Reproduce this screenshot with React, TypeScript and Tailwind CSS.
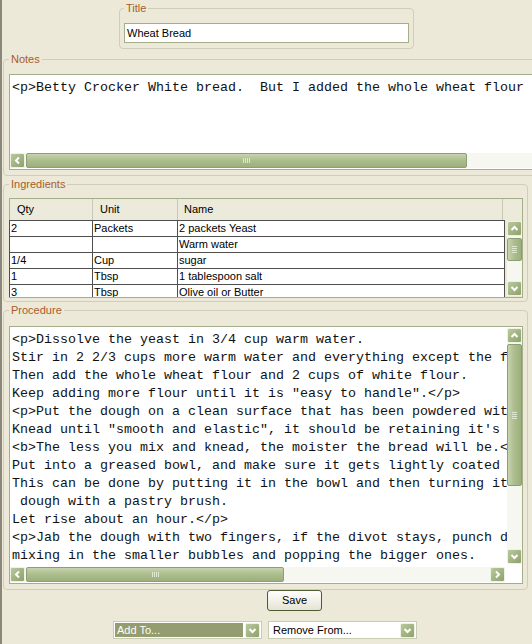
import React from 'react'

const sans = "font-['Liberation_Sans',Arial,sans-serif] text-[11px]"
const mono = "font-['Liberation_Mono','Courier_New',monospace] text-[13.33px] leading-[18px] text-[#111] whitespace-pre"

type Dir = 'up' | 'down' | 'left' | 'right'

const chevrons: Record<Dir, string> = {
  up: '1.5,6 4.5,3 7.5,6',
  down: '1.5,3 4.5,6 7.5,3',
  left: '6,1.5 3,4.5 6,7.5',
  right: '3,1.5 6,4.5 3,7.5',
}

function Arrow({ dir }: { dir: Dir }) {
  return (
    <div className="w-[15px] h-[15px] shrink-0 rounded-[2px] border border-[#eef1e4] bg-linear-to-br from-[#b9c99d] to-[#8fa16b] flex items-center justify-center">
      <svg width="9" height="9" viewBox="0 0 9 9">
        <polyline points={chevrons[dir]} fill="none" stroke="white" strokeWidth="2" />
      </svg>
    </div>
  )
}

function HScroll({ thumb, className = '' }: { thumb: string; className?: string }) {
  return (
    <div className={`flex h-[15px] bg-[#f7f7f2] ${className}`}>
      <Arrow dir="left" />
      <div className="flex-1 flex">
        <div className={`${thumb} h-full ml-px rounded-[2px] border border-[#8e9e72] bg-linear-to-b from-[#c6d3ad] via-[#abbd8c] to-[#9daf7d] flex items-center justify-center gap-px`}>
          {[0, 1, 2, 3].map(i => <div key={i} className="w-px h-[5px] bg-[#dfe7cf]" />)}
        </div>
      </div>
      <Arrow dir="right" />
    </div>
  )
}

function VScroll({ thumb, top, className = '' }: { thumb: string; top: string; className?: string }) {
  return (
    <div className={`flex flex-col w-[15px] bg-[#f7f7f2] ${className}`}>
      <Arrow dir="up" />
      <div className="flex-1 flex flex-col">
        <div className={`${top} ${thumb} w-full rounded-[2px] border border-[#8e9e72] bg-linear-to-r from-[#c6d3ad] via-[#abbd8c] to-[#9daf7d] flex flex-col items-center justify-center gap-px`}>
          {[0, 1, 2, 3].map(i => <div key={i} className="h-px w-[5px] bg-[#dfe7cf]" />)}
        </div>
      </div>
      <Arrow dir="down" />
    </div>
  )
}

function Legend({ children }: { children: React.ReactNode }) {
  return <legend className="px-[2px] leading-[13px] text-[#a95c2c]">{children}</legend>
}

const ingredients = [
  ['2', 'Packets', '2 packets Yeast'],
  ['', '', 'Warm water'],
  ['1/4', 'Cup', 'sugar'],
  ['1', 'Tbsp', '1 tablespoon salt'],
  ['3', 'Tbsp', 'Olive oil or Butter'],
]

const procedure = [
  '<p>Dissolve the yeast in 3/4 cup warm water.',
  'Stir in 2 2/3 cups more warm water and everything except the flour.',
  'Then add the whole wheat flour and 2 cups of white flour.',
  'Keep adding more flour until it is "easy to handle".</p>',
  '<p>Put the dough on a clean surface that has been powdered with flour.',
  'Knead until "smooth and elastic", it should be retaining it\'s shape.',
  '<b>The less you mix and knead, the moister the bread will be.</b>',
  'Put into a greased bowl, and make sure it gets lightly coated with oil.',
  'This can be done by putting it in the bowl and then turning it over,',
  ' dough with a pastry brush.',
  'Let rise about an hour.</p>',
  '<p>Jab the dough with two fingers, if the divot stays, punch down the dough,',
  'mixing in the smaller bubbles and popping the bigger ones.',
]

export default function App() {
  return (
    <div className={`${sans} w-[532px] h-[644px] overflow-hidden bg-[#ece9d8] border-l-2 border-[#8b887b] flex flex-col pt-[2px] text-black`}>
      <fieldset className="ml-[117px] w-[295px] border border-[#d0cdb9] rounded-[4px] px-[4px] pt-[8px] pb-[5px]">
        <Legend>Title</Legend>
        <div className="h-[20px] border border-[#a5ae8a] bg-white flex items-center pl-[2px]">Wheat Bread</div>
      </fieldset>

      <fieldset className="ml-px mt-[4px] w-[525px] border border-[#d0cdb9] rounded-[4px] pl-[5px] pr-[4px] pt-[8px] pb-[5px]">
        <Legend>Notes</Legend>
        <div className="h-[96px] border border-[#a5ae8a] bg-white flex flex-col">
          <div className={`${mono} flex-1 overflow-hidden pl-[2px] pt-[4px]`}>
            {'<p>Betty Crocker White bread.  But I added the whole wheat flour and some olive oil.</p>'}
          </div>
          <HScroll thumb="w-[441px]" className="mb-px" />
        </div>
      </fieldset>

      <fieldset className="ml-px mt-[2px] w-[525px] border border-[#d0cdb9] rounded-[4px] pl-[5px] pr-[4px] pt-[7px] pb-[3px]">
        <Legend>Ingredients</Legend>
        <div className="h-[100px] border-t border-r border-b border-[#a5ae8a] flex flex-col">
          <div className="flex h-[21px] border-l border-[#a5ae8a] bg-[#ebeadb] shrink-0">
            <div className="w-[83px] border-r border-[#cbc7b6] pl-[7px] flex items-center">Qty</div>
            <div className="w-[85px] border-r border-[#cbc7b6] pl-[7px] flex items-center">Unit</div>
            <div className="w-[325px] border-r border-[#cbc7b6] pl-[6px] flex items-center">Name</div>
          </div>
          <div className="flex flex-1 overflow-hidden">
            <div className="w-[496px] border-t border-l border-[#4f4f4f] bg-white">
              {ingredients.map((r, i) => (
                <div key={i} className="flex h-[16px] border-b border-[#4f4f4f] leading-[15px]">
                  <div className="w-[83px] border-r border-[#4f4f4f] pl-px">{r[0]}</div>
                  <div className="w-[85px] border-r border-[#4f4f4f] pl-px">{r[1]}</div>
                  <div className="flex-1 border-r border-[#4f4f4f] pl-px">{r[2]}</div>
                </div>
              ))}
            </div>
            <div className="flex-1 flex justify-end pt-px pb-px">
              <VScroll thumb="h-[23px]" top="mt-[2px]" />
            </div>
          </div>
        </div>
      </fieldset>

      <fieldset className="ml-px mt-[2px] w-[525px] border border-[#d0cdb9] rounded-[4px] pl-[5px] pr-[4px] pt-[9px] pb-[5px]">
        <Legend>Procedure</Legend>
        <div className="h-[258px] border border-[#a5ae8a] bg-white flex flex-col">
          <div className="flex flex-1 overflow-hidden">
            <div className={`${mono} w-[497px] overflow-hidden pl-[2px] pt-[4px]`}>
              {procedure.map((l, i) => <div key={i}>{l}</div>)}
            </div>
            <VScroll thumb="h-[142px]" top="mt-[1px]" className="mt-px mb-[3px]" />
          </div>
          <div className="flex h-[15px] mb-px">
            <HScroll thumb="w-[258px]" className="w-[495px]" />
          </div>
        </div>
      </fieldset>

      <button className="ml-[265px] w-[55px] h-[21px] rounded-[3px] border border-[#4f5b35] bg-linear-to-b from-white to-[#e6e3d3] flex items-center justify-center">
        Save
      </button>

      <div className="flex gap-[6px] ml-[111px] mt-[10px]">
        <div className="w-[149px] h-[18px] border border-[#c8ccb4] bg-white flex p-px">
          <div className="flex-1 bg-[#949d6f] text-white pl-[2px] flex items-center mr-[2px]">Add To...</div>
          <Arrow dir="down" />
        </div>
        <div className="w-[149px] h-[18px] border border-[#c8ccb4] bg-white flex p-px">
          <div className="flex-1 pl-[3px] flex items-center">Remove From...</div>
          <Arrow dir="down" />
        </div>
      </div>
    </div>
  )
}
